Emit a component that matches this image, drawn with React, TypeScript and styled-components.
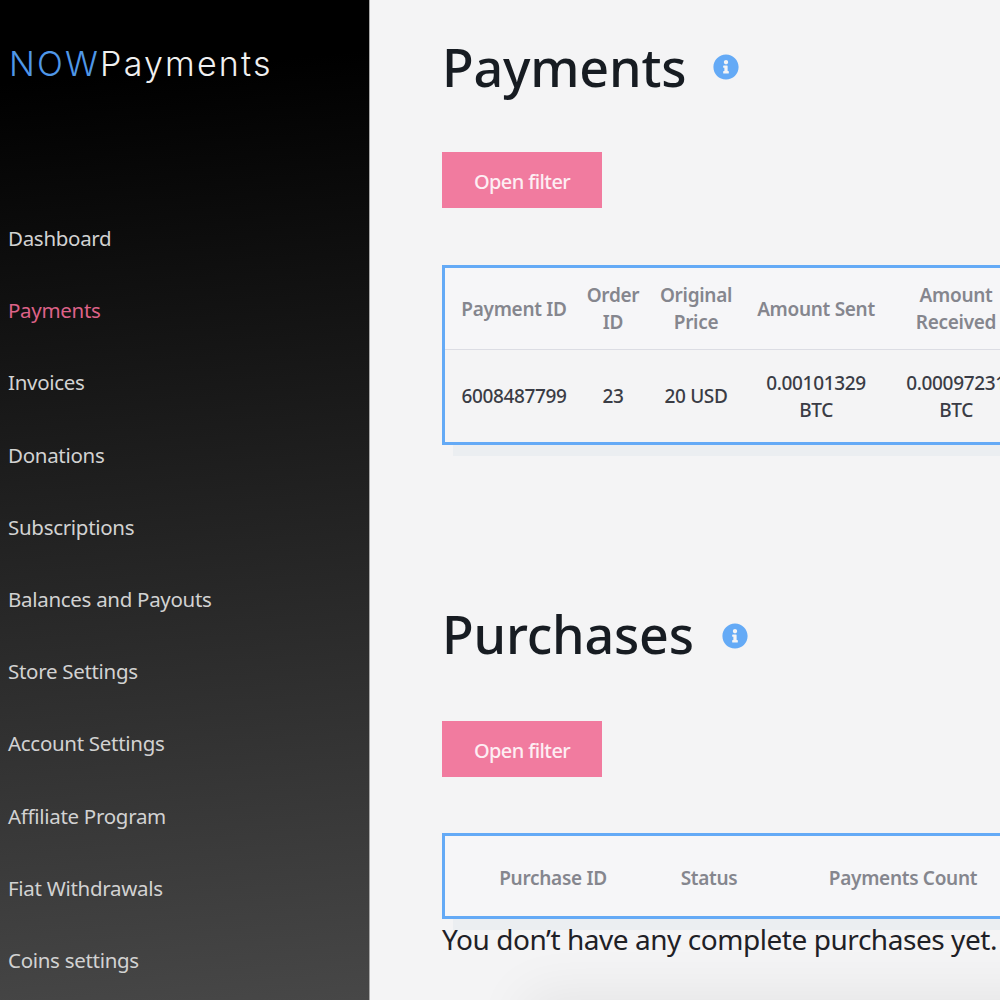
import React, { FC } from 'react';
import styled, { createGlobalStyle } from 'styled-components';
import { FaInfoCircle } from 'react-icons/fa';

const NAV_ITEMS = [
  'Dashboard',
  'Payments',
  'Invoices',
  'Donations',
  'Subscriptions',
  'Balances and Payouts',
  'Store Settings',
  'Account Settings',
  'Affiliate Program',
  'Fiat Withdrawals',
  'Coins settings',
];

const App: FC = () => {
  return (
    <Page>
      <GlobalStyle />
      <Sidebar>
        <Logo>
          <LogoAccent>NOW</LogoAccent>Payments
        </Logo>
        <Nav>
          {NAV_ITEMS.map((item) => (
            <NavItem key={item} $active={item === 'Payments'}>
              {item}
            </NavItem>
          ))}
        </Nav>
      </Sidebar>
      <Main>
        <TitleRow>
          <Title>Payments</Title>
          <InfoIcon size={26} />
        </TitleRow>
        <FilterButton>Open filter</FilterButton>
        <TableFrame>
          <PaymentsGrid>
            <HeadCell>Payment ID</HeadCell>
            <HeadCell>Order ID</HeadCell>
            <HeadCell>Original Price</HeadCell>
            <HeadCell>Amount Sent</HeadCell>
            <HeadCell>Amount Received</HeadCell>
            <BodyCell>6008487799</BodyCell>
            <BodyCell>23</BodyCell>
            <BodyCell>20 USD</BodyCell>
            <BodyCell>0.00101329 BTC</BodyCell>
            <BodyCell>0.00097231 BTC</BodyCell>
          </PaymentsGrid>
        </TableFrame>
        <SecondTitleRow>
          <Title>Purchases</Title>
          <SecondInfoIcon size={26} />
        </SecondTitleRow>
        <FilterButton>Open filter</FilterButton>
        <SecondTableFrame>
          <PurchasesGrid>
            <HeadCell>Purchase ID</HeadCell>
            <HeadCell>Status</HeadCell>
            <HeadCell>Payments Count</HeadCell>
          </PurchasesGrid>
        </SecondTableFrame>
        <EmptyText>You don’t have any complete purchases yet.</EmptyText>
        <BottomShade />
      </Main>
    </Page>
  );
};

const GlobalStyle = createGlobalStyle`
  html, body {
    margin: 0;
    padding: 0;
    height: 1000px;
    overflow: hidden;
    background: #f4f4f5;
  }
`;

const Page = styled.div`
  width: 1000px;
  height: 1000px;
  display: flex;
  overflow: hidden;
  font-family: 'Noto Sans', 'Open Sans', sans-serif;
`;

const Sidebar = styled.aside`
  flex: 0 0 370px;
  height: 1000px;
  box-sizing: border-box;
  padding: 42px 0 0 8px;
  background: linear-gradient(175deg, #000000 8%, #474747 100%);
  border-right: 1px solid #a8a8a8;
`;

const Logo = styled.div`
  height: 44px;
  margin-left: 1px;
  font-family: 'Inter', sans-serif;
  font-size: 34px;
  font-weight: 300;
  line-height: 44px;
  letter-spacing: 2.2px;
  color: #f0f0f0;
`;

const LogoAccent = styled.span`
  color: #4f97e8;
`;

const Nav = styled.nav`
  margin-top: 137px;
  display: flex;
  flex-direction: column;
  gap: 42.2px;
`;

const NavItem = styled.a<{ $active?: boolean }>`
  height: 30px;
  font-size: 20.5px;
  line-height: 30px;
  letter-spacing: -0.3px;
  color: ${({ $active }) => ($active ? '#dd6288' : '#d2d2d2')};
`;

const Main = styled.main`
  flex: 1;
  min-width: 0;
  padding-left: 72px;
  position: relative;
`;

const TitleRow = styled.div`
  margin-top: 32px;
  height: 70px;
  display: flex;
  align-items: center;
  gap: 27px;
`;

const SecondTitleRow = styled(TitleRow)`
  margin-top: 152px;
  height: 74px;
`;

const Title = styled.h1`
  margin: 0;
  font-size: 52px;
  font-weight: 500;
  line-height: 70px;
  letter-spacing: -0.2px;
  color: #171c22;
`;

const InfoIcon = styled(FaInfoCircle)`
  color: #64aaf6;
`;

const SecondInfoIcon = styled(InfoIcon)`
  margin: 3px 0 0 1px;
`;

const FilterButton = styled.button`
  display: block;
  margin-top: 50px;
  width: 160px;
  height: 56px;
  padding: 2px 0 0;
  border: 0;
  background: #f17b9f;
  color: #fdeef3;
  font-family: inherit;
  font-size: 20px;
  font-weight: 500;
  letter-spacing: -0.6px;
`;

const TableFrame = styled.div`
  margin-top: 57px;
  width: 640px;
  box-sizing: border-box;
  border: 3px solid #64aaf6;
  background: #f6f6f8;
  box-shadow: 10px 12px 0 -1px #ebeef1;
`;

const SecondTableFrame = styled(TableFrame)`
  margin-top: 56px;
`;

const PaymentsGrid = styled.div`
  display: grid;
  grid-template-columns: 138px 60px 106px 134px 146px;
  grid-template-rows: 81px 93px;
`;

const PurchasesGrid = styled.div`
  display: grid;
  grid-template-columns: 216px 96px 292px;
  grid-template-rows: 76px;
  padding-top: 4px;
`;

const HeadCell = styled.div`
  display: flex;
  align-items: center;
  justify-content: center;
  padding: 1px 8px 0;
  text-align: center;
  font-size: 19px;
  font-weight: 600;
  line-height: 27px;
  letter-spacing: -0.3px;
  color: #85868e;
`;

const BodyCell = styled.div`
  display: flex;
  align-items: center;
  justify-content: center;
  padding: 1px 14px 0;
  text-align: center;
  font-size: 19px;
  font-weight: 500;
  line-height: 27px;
  letter-spacing: -0.35px;
  color: #3a3c45;
  background: #f4f4f5;
  border-top: 1px solid #dcdde4;
`;

const EmptyText = styled.p`
  margin: 0;
  font-size: 28px;
  line-height: 40px;
  letter-spacing: -0.45px;
  white-space: nowrap;
  color: #1f2126;
`;

// soft shadow of a popup that sits just under the fold
const BottomShade = styled.div`
  position: absolute;
  left: 170px;
  right: -200px;
  top: 1010px;
  height: 40px;
  box-shadow: 0 0 55px 15px rgba(0, 0, 0, 0.07);
`;

export default App;
